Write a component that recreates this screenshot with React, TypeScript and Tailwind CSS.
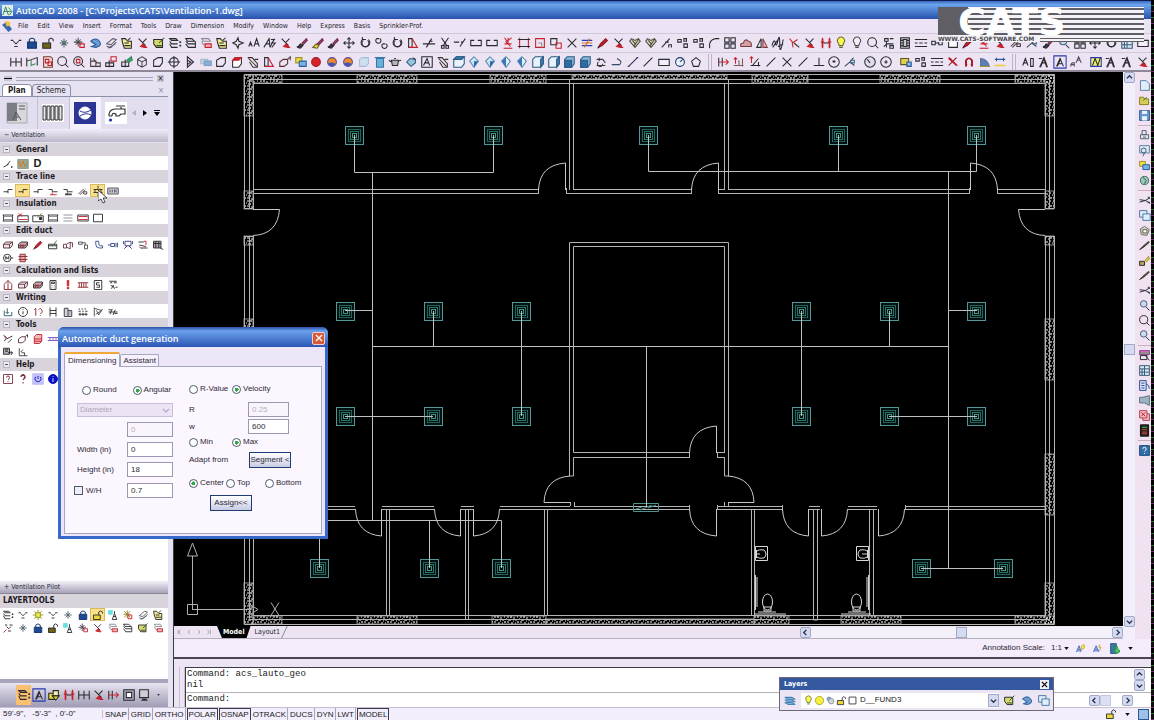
import { useState } from "react";

type Shape = [d: string, stroke: string, fill?: string];

const K = "#2a2a30";
const R = "#c8202c";
const G = "#8a8a94";
const B = "#2a5a9a";
const Y = "#e8d838";
const N = "none";

// 16x16 glyphs: path, stroke, fill
const ICONS: Record<string, Shape[]> = {
  freeze: [["M2 5h3M11 5h3M5 6l3 3 3-3M6 12h4", K]],
  freezeRed: [["M4 4h3M10 4h4M6 6l3 3 3-3M8 12h4", K], ["M2 14l4-4", R]],
  lock: [["M3 7h10v7H3z", "#10306a", "#1c4a94"], ["M5 7V4q3-3 6 0v3", "#10306a"]],
  unlock: [["M2 8h9v6H2z", K, "#6a6414"], ["M9 8V4q2-3 5 0v2", K]],
  unlockYellow: [["M2 8h9v6H2z", K, Y], ["M9 8V4q2-3 5 0v2", K]],
  snow: [["M8 3v10M3 8h10M5 5l6 6M11 5l-6 6", "#4a6468"]],
  snowRed: [["M7 2v10M2 7h10M4 4l6 6M10 4l-6 6", "#4a4a50"], ["M9 9h5v4H9z", R]],
  sun: [["M8 1v14M1 8h14M3 3l10 10M13 3L3 13", "#8a9420"], ["M5 5h6v6H5z", "#8a9420", "#f4f040"]],
  undo: [["M3 6q6-5 10 0t-4 7l-5-1 5-2-6-4", B, "#6a9ad0"]],
  layers: [["M2 3h7l3 3H4zM2 6l3 3h8M2 9l3 4h8V6", K]],
  layersDot: [["M2 3h7l2 2H4zM2 6l2 3h7M2 9l2 4h7", K], ["M13 6h2v2h-2zM13 10h2v2h-2z", N, K]],
  layersGrey: [["M3 9l7-6 4 1-6 6zM3 12l5 1 6-6M5 14l8-5", "#5a5a64"]],
  layersYellow: [["M2 3h4l3 3h4v8H5L3 8z", K, "#f0ec90"], ["M9 5l3-3M5 11h7M5 8h5", K]],
  layersGreen: [["M2 4h10v9H5L2 9z", K, "#d8d870"], ["M8 8l6-6M5 11h6", "#2a5a20"]],
  layersRed: [["M3 3h8l2 3H5zM3 6l2 4h4", G], ["M7 9h7v4H7z", R, "#f0b8bc"]],
  cross: [["M3 3l8 8M12 3l-4 4", K], ["M5 12l3-3 4 4h-2z", R, R]],
  star: [["M8 2l1 4 5 2-5 2-1 4-2-4-4-2 4-2z", K]],
  aa: [["M2 12l2-5 2 5M3 10h2M8 12l3-9 3 9M9 9h4", K]],
  aBold: [["M1 13l6-10 1 10M4 9h4M8 13l5-10M9 4h4l-3 4h4l-4 5", K]],
  eraser: [["M2 12h3M8 8l5-5 1 2-5 5z", "#6a2848", "#b04868"], ["M3 13l3-4 3 2-3 3z", K, "#403040"]],
  eraserY: [["M7 9l6-6 1 2-5 5z", "#6a2848", "#b04868"], ["M2 13l4-4 3 2-2 3z", "#6a6420", Y]],
  move: [["M8 2v12M2 8h12M6 4l2-2 2 2M6 12l2 2 2-2M4 6L2 8l2 2M12 6l2 2-2 2", K]],
  rotate: [["M5 4a5 5 0 1 0 7 0M5 4V1M5 4h4", K], ["M6 5a4 4 0 1 0 5 0", K]],
  rotate2: [["M3 3a3 3 0 1 0 4 0M3 3h3M10 9a3 3 0 1 0 4 0M10 9h3", K]],
  trap: [["M3 3h4v10H3z", K], ["M7 3l6 10H3", R]],
  extend: [["M1 9h14M5 13l6-10M8 6h4", K]],
  scissors: [["M4 2l6 9M12 2L6 11M4 11h3v3H4zM9 11h3v3H9z", K]],
  trim: [["M1 7h6M9 7h2M8 12l6-9", K]],
  brk: [["M6 5H2v6h12V5h-4", K]],
  redman: [["M4 2l3 4 5-4M8 2v7M4 9h8M5 6l6 6", R], ["M3 14h10", R]],
  frame: [["M3 2v12M13 2v12", R], ["M1 4h14M1 12h14", K]],
  rectRed: [["M3 3h10v10H3z", R], ["M6 8h4v5", G]],
  rectsRed: [["M2 3h7v7H2z", K], ["M8 8h6v6H8z", R]],
  x: [["M3 3l10 10M13 3L3 13", K]],
  lines: [["M2 5h12M2 11h12", "#2a3ac0"], ["M2 8h12M5 13l6-10", "#d07020"]],
  marker: [["M3 13l2-4 6-6 2 2-6 6z", "#8a1420", R], ["M2 14l2-3", K]],
  heart: [["M8 13L2 6l2-3 4 2 4-2 2 3zM5 5l4 5M12 4L7 11", "#4a4a3a", "#d4d4c4"]],
  chamfer: [["M2 13l9-10M6 7h4", K], ["M10 13v-3h3v3", K]],
  dots: [["M2 4h4v3H2zM9 3h3v3H9zM9 9h4v4H9z", K]],
  fillet: [["M3 14V9q1-5 7-6h4", K]],
  grid4: [["M2 2h5v5H2zM9 2h5v5H9zM2 9h5v5H2zM9 9h5v5H9z", K]],
  cloud: [["M2 12q-1-4 3-4 2-6 6-2 4 1 3 6z", "#7a3a40", "#d4a0a4"]],
  mirror: [["M7 3v10H2z", K], ["M9 3v10h5z", "#8a3a40", "#e0b8bc"]],
  scribble: [["M1 11q3-9 4-3t3-3 2 5 4-6M2 13l6-9M8 12l6-3", K]],
  redArrow: [["M3 3l4 5M7 13l-1-5 6-4", R], ["M8 8l6 5", K]],
  men: [["M4 2v12M2 7h4M12 2v12M10 7h4", R, R], ["M5 8h6", K], ["M3 3h2v10H3zM11 3h2v10h-2z", N, R]],
  bulb: [["M5 8a4 4 0 1 1 6 0l-1 3H6zM6 13h4", "#6a6a30", "#fafa50"]],
  bulbOff: [["M5 8a4 4 0 1 1 6 0l-1 3H6zM6 13h4", "#4a4a50", "#f4f0f8"]],
  zoom: [["M12 7a5 5 0 1 1-10 0 5 5 0 1 1 10 0M10 10l4 4", K]],
  zoomRed: [["M12 7a5 5 0 1 1-10 0 5 5 0 1 1 10 0M10 10l4 4", K], ["M5 5h4v4H5z", R]],
  zoomBlue: [["M11 6a4 4 0 1 1-8 0 4 4 0 1 1 8 0", "#4a5a7a", "#c8dcf0"], ["M10 10l4 4", "#202838"]],
  tree: [["M3 3h4v3H3zM9 3h4M5 6v7M5 9h8M9 11h4v3H9zM2 12l4-3", K]],
  film: [["M3 2h10v12H3z", K, "#c8c8cc"], ["M6 4h4v8H6zM3 5h3M3 8h3M3 11h3M10 5h3M10 8h3M10 11h3", K]],
  dashes: [["M1 4h14M1 12h14", K], ["M1 8h3M6 8h4M12 8h3", K]],
  oo: [["M2 6h4v4H2zM10 6h4v4h-4zM6 8h4", K]],
  dim: [["M2 3v10M8 3v10M14 3v10M2 8h12", K]],
  dimGreen: [["M2 3v10M2 7l12-4v9", K], ["M7 5v7l5-2", "#3a8a4a"]],
  sheet: [["M3 2h8l2 2v10H3z", "#7a3a30", "#f0e0dc"], ["M5 5h4v4H5zM8 8h4v4H8z", R]],
  table: [["M3 3v10h11M3 7h6v6M6 4l4 5M9 9h5v5", "#4a3a40"]],
  tableRed: [["M2 9h9v4H2zM6 6v8", K], ["M8 2h6v5H8z", R]],
  tableGreen: [["M2 8h8v5H2zM6 5v9", K], ["M8 6l5-4 1 4-4 2z", "#2a8a5a", "#3aa86a"]],
  cube: [["M8 2l5 3v6l-5 3-5-3V5zM3 5l5 3 5-3M8 8v6", "#4a4a50"]],
  poly: [["M3 6l5-3h5v6l-3 4H3z", K]],
  target: [["M13 8A5 5 0 1 1 3 8a5 5 0 1 1 10 0M8 1v14M1 8h14M10 8H6", K]],
  fan: [["M5 2v12l7-6zM5 6l4 2-4 3", K]],
  disk2: [["M2 5h8v5H2z", "#a8bcd0", "#c4d4e4"], ["M6 7h8v5H6z", "#7a9ac0", "#8ab0d4"]],
  boxRed: [["M3 6l3-3h7v7l-3 4H3z", K, "#ffffff"], ["M3 6l3-3h7l-3 3z", R, R]],
  house: [["M2 3h5l6 7v4H8L4 8M3 4l9 9M10 5h4", "#3a3030"]],
  ball: [["M13 8A5 5 0 1 1 3 8a5 5 0 1 1 10 0", "#a01820", "#d8202a"]],
  sphere: [["M13 8A5 5 0 1 1 3 8a5 5 0 1 1 10 0", "#5a4a8a", "#f08828"], ["M12 10a5 5 0 0 1-9 0q4-3 9 0z", N, "#3a58c0"]],
  iceCube: [["M3 5l3-2h7v7l-3 3H3z", "#a4bcd8", "#cfe0f0"]],
  blueCol: [["M4 4h8v10H4zM2 3h12", "#3a78a8", "#6ab0d8"]],
  teapot: [["M4 6h8l-1 6H5zM12 7l3-1M4 8L1 6M7 4h2", K, "#b8b4b8"]],
  gem: [["M3 8l4-4 6 1v4l-5 4z", "#2a5a80", "#9ac4dc"], ["M10 3l3 2", K]],
  aBox: [["M2 2h12v12H2z", K], ["M4 12l4-8 3 8M5 9h5", K]],
  boxBlue: [["M2 5l3-3h9v8l-3 4H2z", "#2a5a84", "#e8f2fa"], ["M2 5l3-3h9l-3 3z", "#2a5a84", "#3a80b4"]],
  boxSide: [["M2 5l3-3h9v8l-3 4H2z", "#2a5a84", "#e8f2fa"], ["M11 5l3-3v8l-3 4z", "#2a5a84", "#3a80b4"]],
  boxFill: [["M3 5l3-3h8v8l-3 4H3z", "#2a5a84", "#8ab8d8"], ["M3 6h8v8H3z", "#2a5a84", "#2c6ca4"]],
  diaBlue: [["M8 2l5 5-5 7-5-7z", "#5a8ab0", "#cfe4f2"], ["M8 7l5 0-5 7z", N, "#2a6aa8"]],
  diaLeft: [["M8 2l5 5-5 7-5-7z", "#5a8ab0", "#e4f0f8"], ["M8 2v12L3 7z", N, "#3a78b0"]],
  orbit: [["M3 5h7l3 4M5 8a3 3 0 1 0 5 2M3 12h10M6 3v4", "#3a3a3a"]],
  arrowCurve: [["M2 11h9q3-3 0-5M11 6L8 4", "#3a4a6a"]],
  line: [["M3 13L13 3M2 13h2M12 3h2", "#2a2a5a"]],
  lineThin: [["M3 13L13 3", K]],
  rect: [["M2 5h12v7H2z", K, "#f4f0fa"]],
  circle: [["M13 8A5 5 0 1 1 3 8a5 5 0 1 1 10 0M8 8l3-3", "#1a3a6a", "#eaf2fa"]],
  penta: [["M8 3l5 4-2 6H5L3 7z", K]],
  hRed: [["M2 3v10M6 3v10", K], ["M2 8h11M10 5l3 3-3 3", R]],
  tRed: [["M4 3v7M2 5l2-2 2 2", R], ["M2 12h11M12 4v9M8 6v6", "#7a5a5a"]],
  lRed: [["M4 2v7M2 4l2-2 2 2", R], ["M3 12h11M5 12l7-8M12 8v5", K]],
  perp: [["M8 3v9M2 12h12", K]],
  ringDot: [["M14 8A6 6 0 1 1 2 8a6 6 0 1 1 12 0M9 8H7v-1h2z", K]],
  node: [["M2 13l6-5 4-5M8 8l5 4", "#3a4a50"], ["M9 6h4v3H9z", "#3a6a8a"]],
  dial: [["M14 8A6 6 0 1 1 2 8a6 6 0 1 1 12 0M8 9L5 5", K, "#e0dce8"]],
  plusRing: [["M14 8A6 6 0 1 1 2 8a6 6 0 1 1 12 0M6 8h4M8 6v4", K]],
  tag: [["M2 4h9v7H2z", "#5a5420", "#e0d050"], ["M9 8h5v5H9z", "#2a5a94", "#8ab4e0"]],
  redX: [["M3 3l9 9M12 3l-9 9", "#7a1018"], ["M4 3l9 9M3 4l9 8", R]],
  magnet: [["M4 13V6q4-5 8 0v7M4 11h2M10 11h2", R], ["M5 13V6q3-4 6 0v7", "#8a1018"]],
  wedge: [["M3 13V4q8 1 10 9z", "#5a6a94", "#5a80b8"], ["M3 13h10", "#b09828"]],
  bars: [["M2 12h12", "#e0b020"], ["M2 5h12M4 3v4M12 3v4", "#2a5aa0"], ["M2 11h12v2H2z", N, "#f0d050"]],
  aOpen: [["M2 12l3-8 3 8M3 9h4M11 4h3v9h-3z", K]],
  aStrike: [["M3 14l5-11 4 11M5 9h6M2 4h4", K], ["M4 14l4-10 3 10", K]],
  aFrame: [["M1 1h14v14H1z", "#2838b0"], ["M4 13l4-9 4 9M5 10h6M5 13l4-9", K]],
  aSmall: [["M2 13q0-5 4-4v4M2 11h4M8 9l3-7 3 7M9 6h4", "#4a4a5a"]],
  aYellow: [["M2 3h12v10H2z", "#2838b0", "#f0f070"], ["M4 12l3-8 3 8 3-9", K]],
  pipe: [["M2 9h6V6h6M8 9v2", K]],
  pipeRed: [["M2 6h5v3h7", K], ["M4 13h9M7 10v3", R]],
  pipeBold: [["M2 6h5v3h7M4 13h9M7 10v3M4 12h9", K]],
  pencil: [["M2 12L9 5M4 13l7-7M9 9h4v3H9z", "#4a3a40"]],
  fit: [["M2 6h12M2 10h12M8 1v4M8 11v4M4 6v4M12 6v4", K, "#d8d0b0"]],
  radiator: [["M1 4h14v8H1zM4 6v4M7 6v4M10 6v4M12 6v4", "#4a4a54", "#d4d0dc"]],
  ins: [["M1 4h14M1 12h14M2 4v8M14 4v8", K], ["M2 6h12M2 10h12", G]],
  insRed: [["M1 5h14v8H1z", K], ["M2 2l5 4M7 2L2 6M2 10h12", R]],
  insGreen: [["M1 5h14v8H1z", K], ["M7 7l6-5", "#7a8a20"], ["M10 7h3v3h-3z", K, K]],
  insLines: [["M2 4h12M2 8h12M2 12h12", G]],
  insFill: [["M1 4h14v8H1z", K, "#ffffff"], ["M2 6h12M2 10h12", R]],
  insBox: [["M2 3h12v10H2z", K, "#ffffff"]],
  duct: [["M2 7l3-3h9v4l-3 4H2zM2 7h8v5M10 7l4-3", "#5a3038", "#f0e4e8"]],
  ductDark: [["M2 7l3-3h9v4l-3 4H2z", K, "#c8a8ac"], ["M2 9h9l3-4M5 7v5M8 7v5", "#7a2830"]],
  ductPen: [["M2 7h11v6H2zM2 9h11", K], ["M7 10l6-8", "#4a6a30"]],
  cone: [["M2 7h4v5H2zM6 7l5-3v9l-5-2M11 5h3v6", "#6a3840"]],
  ducts: [["M2 4h5v3H2zM10 8h4v5h-4zM7 5h4v3", "#4a4a50"]],
  bend: [["M5 3v4q0 5 5 5h4V9h-3q-2 0-2-3V3z", "#3a4a8a"]],
  tee: [["M1 8h4M5 6h5v4H5zM12 5v6M14 5v6", "#3a4a8a"]],
  robot: [["M4 3h8v6H4zM3 13l4-4M13 13L9 9M2 3v4M14 3v4", "#3a3a8a"]],
  mixed: [["M2 4h7M3 8l9 2M5 12h9", K], ["M9 3h3v5M3 10l3 3", R]],
  fullDuct: [["M2 3h10v9H2zM2 6h10M5 3v9M9 3v9M11 12l4 2", K, "#a8a4a8"]],
  motor: [["M12 8A5 5 0 1 1 2 8a5 5 0 1 1 10 0M12 8h3M5 10V6l2 3 2-3v4", K]],
  globeRed: [["M4 3h7v10H4zM2 6h12M2 10h12", "#8a2830", "#e8a8a8"]],
  arch: [["M3 14V7l5-5 5 5v7zM8 2v12", "#8a2830"]],
  calc: [["M4 2h8v12H4zM6 4h4v2H6zM6 9h1M9 9h1M6 12h1M9 12h1", K]],
  bang: [["M7 2h2v7H7zM7 11h2v2H7z", R, R]],
  fence: [["M1 5h14M1 11h14M3 5v6M6 5v6M9 5v6M12 5v6", "#8a2830"]],
  sBox: [["M3 2h10v12H3z", K], ["M10 5H6v3h4v3H6", K]],
  adc: [["M3 3h10M4 5h3M9 5h4M5 8l2 2 2-2M6 13l2-4 2 4M11 11h3", K]],
  down: [["M3 6v7h10V8M7 3v7M5 8l2 2 2-2", "#2a5a60"]],
  info: [["M14 8A6 6 0 1 1 2 8a6 6 0 1 1 12 0M8 7v4M8 4v1", K]],
  oneQ: [["M3 5l2-2v10M9 5q2-4 4 0t-2 5M11 12v1", "#8a2030"]],
  hh: [["M4 2v12M12 2v12M4 6h8M4 10h8", K]],
  building: [["M3 14V3h5v11M8 6h5v8H3M10 8h1M10 11h1", "#3a3a40", "#d4d0dc"]],
  scale: [["M2 4h2M6 4h2M10 4h2M2 7h3M7 7h2M11 7h3M2 11h12M4 9v4M8 9v4M12 9v4", K]],
  flag: [["M3 2v12M3 3l10 3-8 5M6 6l3 6 5-8", "#4a4a50"]],
  dist: [["M2 8h12M4 11l3-7M8 12l3-7M2 5h4M10 10h4", K]],
  tools: [["M2 3l4 3-3 5M6 8l8-4M8 13l5-5", K], ["M3 5l3 1", R]],
  pump: [["M2 8l4-3h5v5l-4 3H2zM11 5l3-3v4", "#5a3038"]],
  stack: [["M3 5l3-3h7v9l-3 3H3zM3 8h10M3 11h10", R, "#f0b8b8"]],
  purple: [["M1 6h14M1 10h14M4 6v4M8 6v4M12 6v4", "#7a58b8"]],
  export: [["M2 3h8v8H2zM4 5h4M4 7h4M8 9h6l-2-2M14 9l-2 3", K, "#b4b0b8"]],
  axes: [["M3 3v10h11M6 9h4v4M8 5l-3 3", "#3a3a40"]],
  helpBox: [["M2 2h12v12H2z", "#7a3040"], ["M6 6q0-2 2-2t2 2-2 3M8 11v1", "#7a1828"]],
  help: [["M5 5q0-3 3-3t3 3-3 4M8 12v2M6 5q0-2 2-2t2 2-2 4", "#6a0c18"]],
  power: [["M1 1h14v14H1z", "#b8b8f0", "#c4c4f8"], ["M5 5a4 4 0 1 0 6 0M8 4v4", "#1010c0"]],
  infoBlue: [["M14 8A6 6 0 1 1 2 8a6 6 0 1 1 12 0", "#0810a8", "#0810c8"], ["M8 7v5M8 4v1", "#ffffff"]],
  leader: [["M2 12l4-2 5-6M6 10l3-2", K], ["M12 11h2v2h-2z", N, K]],
  woven: [["M1 2h14v12H1z", "#8a9a80", "#a0a488"], ["M2 4l3 8 3-8 3 8 3-8", "#d07828"], ["M2 2v2M14 2v12", "#4ab4d0"]],
  figure: [["M10 3v3l3 8H7l3-8M8 10h4", K], ["M2 2h5v5H2z", "#68e0e0", "#68e0e0"]],
  sunRed: [["M2 7h9M7 2v10M3 3l8 8M11 3l-8 8", "#8a8420"], ["M8 8h5v5H8z", R]],
  shapes: [["M2 6h7v7H2z", K, Y], ["M7 3h6v6H7z", K, "#f4f0b0"], ["M6 9l4 5 4-5z", K, Y]],
  marquee: [["M2 2h12v12H2z", K, "#a8a8b4"], ["M5 5h6v6H5z", K, "#ffffff"]],
  monitor: [["M3 2h10v9H3zM6 13h5M5 14h7", K, "#d0ccd8"]],
  page: [["M3 2h7l4 4v8H3z", "#5a84ac", "#e0eef8"]],
  folder: [["M2 4h5l1 2h5v7H2z", "#8a7c20", "#d8cc58"], ["M6 8l5-4", "#3a7a3a"]],
  save: [["M2 2h12v12H2z", "#2a5a94", "#6a9cd0"], ["M5 2h6v4H5zM5 9h6v5H5z", N, "#f0f4fa"]],
  print: [["M5 2h5v5H5zM3 7h10v5H3zM6 10h4", "#5a6478", "#e4e8f0"]],
  preview: [["M2 2h12v9H2z", "#5a84ac", "#d8e8f4"], ["M10 8a3 3 0 1 1-6 0 3 3 0 1 1 6 0M8 11l-2 4", "#4a5a6a"]],
  publish: [["M2 3h7v6H2z", "#a09020", "#f0e040"], ["M6 7h8v6H6z", "#2a60a0", "#78b0e8"]],
  globe: [["M13 8A5 5 0 1 1 3 8a5 5 0 1 1 10 0", "#3a6a64", "#9cc8b8"], ["M6 4l4 4-2 4", "#2a5a44"]],
  cut: [["M2 7l7 1 5-3M2 10l7-2 5 3M12 4h2v2M12 10h2v2", "#2a3040"]],
  copy: [["M2 2h9v8H2z", "#4a78a8", "#e0eef8"], ["M6 6h9v8H6z", "#4a78a8", "#e0eef8"]],
  paste: [["M3 6l5-3 6 4-3 7-7-1z", "#6a6a5a", "#d8d8c8"], ["M6 7h5v4H6z", "#5a5a50", "#ffffff"]],
  brush: [["M2 13l4-4 7-6 1 1-7 6z", "#403830", "#6a5038"]],
  brushGold: [["M2 9h6v5H2z", K, "#b8a060"], ["M8 9l5-6 1 3-4 4", "#a09020", "#e8d040"]],
  props: [["M2 2h12v5H2z", "#8a3a8a", "#e070c8"], ["M2 5h12", "#40b040"], ["M3 8h8v5H3zM9 8l5 6", K]],
  gridBlue: [["M2 2h12v12H2zM2 6h12M2 10h12M8 2v12M5 6v8", "#3a5a7a", "#d8e8f0"]],
  sheetSet: [["M2 2h8v12H2zM4 5h4M4 8h4M4 11h4M10 6q4 1 4 6", "#2a4a9a", "#e0e8f8"]],
  mark: [["M2 4h4l8-2v12l-6-3H2z", "#5a7484", "#9cb4c0"]],
  closeRed: [["M2 2h9v9H2zM11 6h3v8H6v-3", "#b84050", "#f0c0c4"], ["M4 4l5 5M9 4L4 9", "#c01828"]],
  calcDark: [["M3 1h10v14H3z", "#101010", "#282420"], ["M5 4h6", "#40c060"], ["M5 7h6M5 10h6M5 12h6", "#d04040"]],
  helpBlue: [["M2 2h12v12H2z", "#1c4880", "#3470a8"], ["M6 6q0-2 2-2t2 2-2 3M8 11v1", "#ffffff"]],
  layersBlue: [["M2 5h8l4 2H6zM2 8h8l4 2H6zM2 11h8l4 2H6z", "#4a84b8", "#b8d8f0"]],
  twoCirc: [["M9 6a3 3 0 1 1-6 0 3 3 0 1 1 6 0", "#5a84b4", "#8ab4e0"], ["M13 9a4 4 0 1 1-8 0 4 4 0 1 1 8 0", "#8a9098", "#d0d4dc"]],
  sunYellow: [["M14 8A6 6 0 1 1 2 8a6 6 0 1 1 12 0", "#a8a020", "#f8f040"]],
  square: [["M3 3h10v10H3z", K, "#ffffff"]],
  annoA: [["M2 13l4-9 3 9M4 10h4", "#3a5ac0", "#a8c0e8"], ["M9 5l4-3 1 5-4 3z", "#b8a820", "#f0e860"]],
  annoB: [["M2 13l4-9 4 9M4 10h5", "#3a5ac0", "#a8c0e8"], ["M11 2l-1 4h3l-2 5", "#c09818"]],
  annoC: [["M2 2h7v12H2z", "#2a5a84", "#3a78a4"], ["M13 10a3 3 0 1 1-4-2l-1-3 3 1", "#289040", "#50c060"]],
};

function Icon({ name, className = "size-3" }: { name: string; className?: string }) {
  return (
    <svg viewBox="0 0 16 16" className={className + " shrink-0"} fill="none" strokeWidth={1.2} aria-hidden="true">
      {(ICONS[name] ?? []).map(([d, stroke, fill], i) => (
        <path key={i} d={d} stroke={stroke} fill={fill ?? "none"} />
      ))}
    </svg>
  );
}

function ToolButton({ name, className = "", icon = "size-3.5" }: { name: string; className?: string; icon?: string }) {
  return (
    <button type="button" aria-label={name} className={"flex items-center justify-center " + className}>
      <Icon name={name} className={icon} />
    </button>
  );
}

const ROW_ONE =
  "freeze lock unlock snow snowRed undo layersGrey layersYellow cross layersGreen layersDot layers layersRed layersYellow star aa aBold cross eraser eraserY eraser move rotate rotate2 rotate trap extend scissors trim brk brk redman frame rectRed rectsRed x lines marker cross heart heart chamfer dots dots fillet grid4 cloud mirror scribble redArrow cross men bulb bulbOff zoom tree film dashes oo square marker redman cross pencil node eraser zoomBlue grid4 move rotate gridBlue rect";

// "|" is a toolbar grip, "." a small gap
const ROW_TWO =
  "dim dimGreen sheet zoom zoomRed table tableRed tableGreen cube poly target fan disk2 poly boxRed house trap pump publish ball sphere sphere iceCube blueCol teapot gem aBox house boxBlue diaBlue diaBlue diaLeft diaLeft boxSide boxSide boxFill boxFill orbit arrowCurve line lineThin rect circle penta | hRed tRed lRed lineThin x lineThin perp ringDot node . dial plusRing . tag dots dashes redX magnet wedge bars | aOpen aStrike aFrame aSmall . aYellow aStrike aStrike cross";

const MENUS = ["File", "Edit", "View", "Insert", "Format", "Tools", "Draw", "Dimension", "Modify", "Window", "Help", "Express", "Basis", "Sprinkler-Prof."];

const GROUPS: { title: string; rows: string[] }[] = [
  { title: "General", rows: ["leader woven D"] },
  { title: "Trace line", rows: ["pipe *pipe pipe pipeRed pipeBold pencil *fit radiator"] },
  { title: "Insulation", rows: ["ins insRed insGreen ins insLines insFill insBox"] },
  { title: "Edit duct", rows: ["duct ductDark marker ductPen cone ducts bend tee robot mixed fullDuct", "motor globeRed"] },
  { title: "Calculation and lists", rows: ["arch duct ductDark calc bang fence sBox adc"] },
  { title: "Writing", rows: ["down info oneQ hh building scale flag dist"] },
  { title: "Tools", rows: ["tools pump stack purple", "export axes"] },
  { title: "Help", rows: ["helpBox help power infoBlue"] },
];

const LAYER_ROWS = [
  "layersDot freeze sun freeze snow lock *unlockYellow figure sunRed layersGrey layersYellow",
  "freezeRed snow lock unlock figure snowRed cross layersRed layers layersGreen layersRed",
];

function IconRow({ row }: { row: string }) {
  return (
    <div className="flex h-[13px] items-center">
      {row.split(" ").map((raw, i) => {
        const active = raw.startsWith("*");
        const name = active ? raw.slice(1) : raw;
        if (name === "D") {
          return (
            <button key={i} type="button" className="w-[15px] font-['Liberation_Sans'] text-[11px] leading-none font-bold">
              D
            </button>
          );
        }
        return (
          <ToolButton
            key={i}
            name={name}
            icon="size-3"
            className={active ? "h-[13px] w-[15px] border border-[#d8b860] bg-[#fbe08c]" : "w-[15px]"}
          />
        );
      })}
    </div>
  );
}

function Logo() {
  return (
    <div className="absolute top-[7px] right-[10px] z-10 w-[206px] bg-[#f4f2f6]">
      <svg viewBox="0 0 206 35" className="block w-full overflow-visible" aria-hidden="true">
        <path d="M0 0h30v28H0z" fill="#5e5e64" />
        {[1, 6, 11, 16, 21, 26].map((y) => (
          <path key={y} d={`M24 ${y}h182v2H24z`} fill="#5e5e64" />
        ))}
        <path d="M102 31h104v1H102zM102 34h104v1H102z" fill="#5e5e64" />
        <text x="20" y="28" fill="#ffffff" fontFamily="'DejaVu Sans', sans-serif" fontWeight="700" fontSize="38">
          CATS
        </text>
        <text x="0" y="34" fill="#4a4a50" fontFamily="'DejaVu Sans', sans-serif" fontWeight="700" fontSize="6">
          WWW.CATS-SOFTWARE.COM
        </text>
      </svg>
    </div>
  );
}

function Palette() {
  return (
    <aside className="flex w-[174px] shrink-0 flex-col border-r border-[#3c3a44] bg-[#e6e2f2] pr-[5px]">
      <div className="flex h-[13px] items-center gap-1 px-1">
        <button type="button" aria-label="Collapse" className="flex h-[5px] w-2 items-center bg-[#c8c4d4]">
          <span className="h-px w-full bg-black" />
        </button>
        <div className="h-1 flex-1 border-y border-[#a8a4b8]" />
        <button type="button" aria-label="Close palette" className="flex size-[7px] items-center justify-center bg-[#c8c4d4] text-[8px] leading-none">×</button>
      </div>
      <div className="flex h-3 items-end border-b border-[#8c90a8] px-0.5 text-[8px] leading-[11px]">
        <button type="button" className="rounded-t-sm border border-b-0 border-[#8c90a8] bg-white px-[5px] font-bold">Plan</button>
        <button type="button" className="rounded-t-sm border border-b-0 border-[#8c90a8] px-1">Scheme</button>
        <button type="button" aria-label="Close tab" className="ml-auto pr-0.5 text-[#8a8698]">×</button>
      </div>
      <div className="flex h-8 items-center bg-[#e2def0] px-1.5">
        <button type="button" aria-label="Heating" className="flex h-8 w-8 items-center border-r border-[#c4c0d0]">
          <svg viewBox="0 0 22 22" className="size-[22px]">
            <path d="M1 1h20v20H1z" fill="#d8d8dc" stroke="#aaa" />
            <path d="M1 1h10v18H1z" fill="#7c7c84" />
            <path d="M7 18l3-8 5 8M9 15h4M13 4h6M13 7h6" stroke="#55555c" fill="none" />
          </svg>
        </button>
        <button type="button" aria-label="Radiators" className="flex h-8 w-8 items-center justify-center">
          <svg viewBox="0 0 22 22" className="size-[22px]">
            <path d="M0 2h22v18H0z" fill="#ffffff" />
            {[1, 5, 9, 13, 17].map((x) => (
              <path key={x} d={`M${x} 4h3v14h-3z`} fill="#e8e8e8" stroke="#33333a" />
            ))}
          </svg>
        </button>
        <button type="button" aria-label="Ventilation" className="flex h-8 w-8 items-center justify-center border-l border-[#c4c0d0] bg-[#f4f0fc]">
          <svg viewBox="0 0 22 22" className="size-[22px]">
            <path d="M0 0h22v22H0z" fill="#2c3494" />
            <circle cx="11" cy="11" r="6" fill="#ffffff" stroke="#fff" />
            <path d="M6 9q5 3 11-1M6 14q6-4 11-1" stroke="#2c3494" fill="none" />
          </svg>
        </button>
        <button type="button" aria-label="Sanitary" className="flex h-8 w-8 items-center justify-center">
          <svg viewBox="0 0 22 22" className="size-[22px]">
            <path d="M0 0h22v22H0z" fill="#ffffff" />
            <path d="M4 14v-2q1-5 7-5h5V5M11 4h9M16 7h4v5h-4l-2 2h-3v-2q-4-2-4 2M4 14h3" fill="none" stroke="#333" strokeWidth="1.2" />
            <circle cx="5.500" cy="18" r="1.6" fill="#2030b0" />
          </svg>
        </button>
        <div className="ml-auto flex gap-[7px] pr-0.5">
          <svg viewBox="0 0 4 6" className="h-1.5 w-1"><path d="M4 0v6L0 3z" fill="#b4b0c0" /></svg>
          <svg viewBox="0 0 4 6" className="h-1.5 w-1"><path d="M0 0v6l4-3z" fill="#000" /></svg>
          <svg viewBox="0 0 6 6" className="size-1.5"><path d="M0 0h6v1H0zM0 2h6L3 6z" fill="#000" /></svg>
        </div>
      </div>
      <h2 className="mb-px flex h-[13px] shrink-0 items-center bg-linear-to-b from-[#f0ecf8] to-[#bcb8ca] pl-1 text-[7px] leading-none text-[#2c2a34]">− Ventilation</h2>
      <div className="flex-1 bg-white">
        {GROUPS.map((g) => (
          <section key={g.title}>
            <h3 className="flex h-[13px] items-center gap-1.5 bg-[#d9d4dc] pl-[3px] text-[8px] leading-none font-bold text-[#1c1a24]">
              <span className="flex size-[7px] items-center justify-center border border-[#b8b4c4] bg-[#eeeaf4] leading-none font-normal">
                <span className="h-px w-[3px] bg-[#555]" />
              </span>
              {g.title}
            </h3>
            <div className="pt-px">
              {g.rows.map((r) => <IconRow key={r} row={r} />)}
            </div>
          </section>
        ))}
      </div>
      <h2 className="flex h-3 shrink-0 items-center bg-linear-to-b from-[#f4f0fa] to-[#a8a4b8] pl-1 text-[7px] leading-none text-[#2c2a34]">+ Ventilation Pilot</h2>
      <h3 className="flex h-[15px] shrink-0 items-center border-t border-[#8c8898] bg-[#d9d4dc] pl-[3px] text-[8px] leading-none font-bold">LAYERTOOLS</h3>
      <div className="h-[71px] shrink-0 bg-white">
        {LAYER_ROWS.map((r) => <IconRow key={r} row={r} />)}
      </div>
      <div className="h-1 shrink-0 bg-[#a8a4bc]" />
      <div className="flex h-6 shrink-0 items-center bg-linear-to-b from-[#e8e4f0] to-[#a09cb4] pl-4">
        {["layersDot", "aFrame", "shapes", "men", "dim", "cross", "hRed", "marquee", "monitor"].map((n, i) => (
          <ToolButton key={n} name={n} className={i === 0 ? "h-5 w-[15px] bg-[#f8c070]" : "h-5 w-[15px]"} />
        ))}
        <svg viewBox="0 0 4 3" className="ml-1.5 h-[2px] w-[3px]"><path d="M0 0h4L2 3z" fill="#333" /></svg>
      </div>
    </aside>
  );
}

const DIFFUSERS: [number, number][] = [
  [354.5, 135.5], [493.5, 135.5], [648.5, 135.5], [838.5, 135.5], [976.5, 135.5],
  [345.5, 311.5], [433.5, 311.5], [521.5, 311.5], [801.5, 311.5], [889.5, 311.5], [976.5, 311.5],
  [345.5, 416.5], [433.5, 416.5], [521.5, 416.5], [801.5, 416.5], [889.5, 416.5], [976.5, 416.5],
  [319.5, 568.5], [429.5, 568.5], [501.5, 568.5], [921.5, 568.5], [1003.5, 568.5],
];

const WALLS =
  // outer walls
  "M244.5 208V74.5H1054.5V208M249.5 209V79.5H1049.5V209M253.5 209V83.5H1045.5V209" +
  "M244.5 236V624.5H1054.5V236M249.5 236V619.5H1049.5V236M253.5 236V615.5H1045.5V236M244.5 208.5h9M244.5 236.5h9M1045.5 208.5h9M1045.5 236.5h9" +
  // upper rooms
  "M253 189.5H538M253 193.5H538M538.5 188v6M566 193.5H691M573 189.5H691M691.5 188v6M566.5 188v6M718 189.5h6M718 193.5H969M728 189.5H969M969.5 188v6M718.5 188v6M997 189.5h48M997 193.5h48M997.5 188v6" +
  "M569.5 80V190M573.5 83V190M724.5 83V190M728.5 80V190" +
  // core
  "M569.5 476V242.5H728.5V476M573.5 452.5V246.5H724.5V452.5M573.5 452.5H689M573.5 457.5H689M689.5 452v6M717 452.5h8M717 457.5h8M717.5 452v6M573.5 457.5V476h-4M724.5 457.5V476h4" +
  // lower rooms
  "M253 506.5H355M253 509.5H355M382 506.5h52M382 509.5h52M461 506.5h13M461 509.5h13M500 506.5h70M500 509.5H689M574 506.5H689M689.5 505v5M717 506.5h65M717 509.5h65M717.5 505v5M782.5 505v5M809 506.5h11M809 509.5h11M848 506.5h29M848 509.5h29M905 506.5h140M905 509.5h140M905.5 505v5M570.5 502v4M574.5 502v4M724.5 502v4M728.5 502v4" +
  "M386.5 510V615M389.5 510V615M465.5 510V620M468.5 510V620M544.5 510V615M547.5 510V615M751.5 510V615M754.5 510V615M813.5 510V620H817.5V510M869.5 510V615M873.5 510V615";

const DOORS =
  "M253 209.5h26.5q-2 25-26.5 26M1045 209.5h-26.5q2 25 26.5 26" +
  "M538.5 190q1-25 27-27v27M691.5 190q1-25 27-27v27M997.5 190q-1-25-27-27v27M689.5 453q1-25 27-27v27" +
  "M570 476q-25 2-26 26.5h26M728 476q25 2 26 26.5h-26" +
  "M355.5 509q1 25 26 27v-27M434.5 509q1 25 26 27v-27M499.5 509q-1 25-26 27v-27M689.5 509q1 25 27 27v-27M782.5 509q1 25 26 27v-27M847.5 509q-1 25-26 27v-27M904.5 509q-1 25-26 27v-27";

const TRACES =
  "M354.5 135v37.5H493.5V135M372.5 172.5V520.5M319.5 568V520.5H501.5V568M429.5 520V568M372 346.5H948M648.5 135v36.5H976.5V135M838.5 135v36M948.5 171.5V568" +
  "M345 310.5h27M433.5 311v35M521.5 311V416M801.5 311V416M889.5 311v35M948 310.5h29M345 416.5h88M889 416.5h88M646.5 346V507M921 568.5h82";

const HATCHES: [number, number, number, number][] = [
  [253, 75, 29, 8], [357, 75, 60, 8], [490, 75, 56, 8], [572, 75, 155, 4], [752, 75, 56, 8], [880, 75, 60, 8], [1015, 75, 39, 8],
  [244, 75, 9, 41], [244, 191, 9, 18], [244, 236, 9, 9], [244, 319, 9, 62], [244, 583, 9, 41],
  [1045, 75, 9, 41], [1045, 191, 9, 18], [1045, 236, 9, 9], [1045, 319, 9, 61], [1045, 454, 9, 61], [1045, 583, 9, 41],
  [253, 616, 29, 8], [357, 616, 60, 8], [492, 616, 54, 8], [546, 619, 208, 5], [754, 616, 35, 8], [841, 616, 60, 8], [1015, 616, 39, 8],
];

function FloorPlan() {
  return (
    <svg viewBox="174 72 949 554" className="min-h-0 w-full flex-1 bg-black" fill="none" preserveAspectRatio="xMidYMid meet" role="img" aria-label="Floor plan">
      <defs>
        <pattern id="concrete" width="13" height="8" patternUnits="userSpaceOnUse">
          <path d="M0 1h2M4 0v2M6 2h2M10 1h1M12 3h1M1 4h1M3 3v2M6 5h1M8 4h2M11 5v2M0 6h2M4 7h2M8 7h1" stroke="#f0f0f0" strokeWidth="1.2" />
        </pattern>
      </defs>
      {HATCHES.map(([x, y, w, h], i) => (
        <rect key={i} x={x} y={y} width={w} height={h} fill="url(#concrete)" stroke="#c8c8c8" strokeWidth="0.7" />
      ))}
      <path d={WALLS} stroke="#b4b4b4" />
      <path d={DOORS} stroke="#c8c8c8" />
      {/* sanitary objects */}
      <g stroke="#d8d8d8">
        <path d="M755.5 546.5h12v14h-12zM856.5 546.5h12v14h-12zM756.5 550v8M867.5 550v8M755.5 575v35M757 577v30M868.5 575v35M867 577v30M754 614h32M841 614h30M758 612h18M848 612h18" />
        <path d="M757 551q2-2 7-1 4 4 0 8-5 1-7-1M867 551q-2-2-7-1-4 4 0 8 5 1 7-1M862 554h5M757 554h3" />
        <path d="M764 611h7v-4h-7zM853 611h7v-4h-7z" />
        <ellipse cx="767.5" cy="602" rx="5" ry="8" /><ellipse cx="856.5" cy="602" rx="5" ry="8" />
      </g>
      {DIFFUSERS.map(([x, y]) => (
        <g key={`${x}-${y}`} stroke="#24625e">
          <rect x={x - 9} y={y - 9} width="18" height="18" fill="#031010" stroke="#549696" />
          <rect x={x - 6} y={y - 6} width="12" height="12" />
          <rect x={x - 4} y={y - 4} width="8" height="8" stroke="#2c7468" />
          <rect x={x - 2} y={y - 2} width="4" height="4" stroke="#4c9480" />
        </g>
      ))}
      <path d="M633.5 503.5h25v8h-25zM640 510l12-5M636 509l6-2M648 508l8-3" stroke="#4c9490" />
      <path d={TRACES} stroke="#c0c0c0" />
      {/* UCS icon */}
      <path d="M187.5 604.5h10v10h-10zM192.5 609V556M187.5 556h10l-5-13zM192 609.5h58M250 604.5v10l8-5zM271 602.5l8 13M279 602.5l-8 13" stroke="#b0b0b0" />
    </svg>
  );
}

function ScrollButton({ label, d }: { label: string; d: string }) {
  return (
    <button type="button" aria-label={label} className="flex size-[11px] shrink-0 items-center justify-center rounded-xs border border-[#a4a8c8] bg-[#d4daf0]">
      <svg viewBox="0 0 8 8" className="size-[7px]" fill="none" stroke="#28304c" strokeWidth="1.6"><path d={d} /></svg>
    </button>
  );
}

const UP = "M1 5l3-3 3 3";
const DOWN = "M1 3l3 3 3-3";
const LEFT = "M5 1L2 4l3 3";
const RIGHT = "M3 1l3 3-3 3";

const SIDE_TOOLS = "page folder save | print preview publish globe | cut copy paste brush brushGold brush cut zoomBlue zoom zoomBlue | props gridBlue sheetSet mark closeRed calcDark | helpBlue";

function Workspace() {
  return (
    <main className="flex min-w-0 flex-1 flex-col">
      <div className="flex min-h-0 flex-1">
        <div className="flex min-w-0 flex-1 flex-col">
          <FloorPlan />
          <div className="flex h-[13px] shrink-0 items-center border-b border-[#b4b0bc] bg-[#ece4f2] text-[7px] leading-none">
            <div className="flex h-full w-[43px] items-center gap-1 pl-0.5">
              {["M3 1v6M6 1L4 4l2 3", "M5 1L3 4l2 3", "M3 1l2 3-2 3", "M2 1l2 3-2 3M6 1v6"].map((d) => (
                <svg key={d} viewBox="0 0 8 8" className="size-1.5" fill="none" stroke="#98949f"><path d={d} /></svg>
              ))}
            </div>
            <button type="button" className="h-full bg-black px-1.5 font-bold text-white [clip-path:polygon(0_0,100%_0,calc(100%-4px)_100%,5px_100%)]">Model</button>
            <button type="button" className="h-full pr-1 pl-1">Layout1</button>
            <span className="h-full w-px -skew-x-[25deg] bg-[#8c8898]" />
            <div className="ml-auto flex w-[34%] items-center justify-between bg-[#f4f0fa]">
              <ScrollButton label="Scroll left" d={LEFT} />
              <span className="h-[11px] w-[11px] border border-[#a4a8c8] bg-[#d4daf0]" />
              <ScrollButton label="Scroll right" d={RIGHT} />
            </div>
          </div>
        </div>
        <div className="flex w-3 shrink-0 flex-col items-center justify-between bg-[#f2eefa] pb-3">
          <ScrollButton label="Scroll up" d={UP} />
          <span className="size-[11px] border border-[#a4a8c8] bg-[#d4daf0]" />
          <ScrollButton label="Scroll down" d={DOWN} />
        </div>
        <div className="flex w-4 shrink-0 flex-col items-end bg-[#f0e2f0] pt-1.5">
          {SIDE_TOOLS.split(" ").map((n, i) =>
            n === "|" ? (
              <span key={i} className="my-0.5 h-px w-[13px] bg-[#c8b0c0]" />
            ) : (
              <ToolButton key={i} name={n} className="h-[15px] w-[13px]" icon="size-[13px]" />
            ),
          )}
        </div>
      </div>
      <div className="flex h-5 shrink-0 items-center justify-end gap-1.5 border-b-2 border-[#4a4650] bg-[#f4ecfa] pr-[18px] font-['Liberation_Sans',sans-serif] text-[8px] leading-none text-[#2c2a34]">
        <span>Annotation Scale:</span>
        <button type="button" className="flex items-center gap-0.5">
          1:1
          <svg viewBox="0 0 6 4" className="h-[3px] w-[5px]"><path d="M0 0h6L3 4z" fill="#111" /></svg>
        </button>
        <ToolButton name="annoA" icon="size-[11px]" />
        <ToolButton name="annoB" icon="size-[11px]" />
        <ToolButton name="annoC" icon="size-[13px]" />
        <svg viewBox="0 0 6 4" className="h-[3px] w-[5px]"><path d="M0 0h6L3 4z" fill="#111" /></svg>
      </div>
      <div className="flex h-12 shrink-0 bg-[#ece4f2] pt-2">
        <div className="ml-[5px] w-1.5 border-x border-[#c8c0d0]" />
        <div className="flex min-w-0 flex-1 flex-col border-t border-l border-[#3c3a44] bg-white font-['Liberation_Mono',monospace] text-[9px] text-[#202024]">
          <div className="flex h-6 justify-between pt-px">
            <pre className="pl-px font-[inherit] leading-[11px]">{"Command: acs_lauto_geo\nnil"}</pre>
            <div className="pr-1.5">
              <ScrollButton label="History up" d={UP} />
              <ScrollButton label="History down" d={DOWN} />
            </div>
          </div>
          <div className="flex flex-1 items-center border-t border-[#b4b0bc] pr-[18px]">
            <label htmlFor="command" className="pl-px">Command:</label>
            <input id="command" className="ml-1 h-3 min-w-0 flex-1 bg-transparent outline-none" />
            <ScrollButton label="Command left" d={LEFT} />
            <span className="mr-[11px] size-[11px] border border-[#c4c8dc] bg-[#dce0f4]" />
            <ScrollButton label="Command right" d={RIGHT} />
          </div>
        </div>
      </div>
    </main>
  );
}

const fieldText = "font-['Liberation_Sans',sans-serif] text-[8px] leading-none";

function Radio({ name, label, checked, className = "" }: { name: string; label: string; checked?: boolean; className?: string }) {
  return (
    <label className={"flex items-center gap-0.5 whitespace-nowrap " + className}>
      <input
        type="radio"
        name={name}
        defaultChecked={checked}
        className="size-[9px] shrink-0 appearance-none rounded-full border border-[#4a5c6c] bg-white checked:bg-[radial-gradient(circle,#30a848_0_2px,#ffffff_2px)]"
      />
      {label}
    </label>
  );
}

function DuctDialog() {
  const [tab, setTab] = useState("Dimensioning");
  const box = "h-[15px] border border-[#9c98b4] bg-white px-[3px] leading-none disabled:text-[#b8b0c0] disabled:bg-[#faf4fc]";
  const push = "h-4 w-[42px] border border-[#203c74] bg-linear-to-b from-white to-[#c8cce4] leading-none whitespace-nowrap";
  return (
    <div role="dialog" aria-label="Automatic duct generation" className="absolute top-[327px] left-[58px] z-20 w-[270px] rounded-t-md bg-[#3868c8] px-[3px] pb-[3px]">
      <div className="-mx-[3px] flex h-5 items-center justify-between rounded-t-md bg-linear-to-b from-[#2a50a8] via-[#6ca0ec] via-20% to-[#2c56b4] pt-0.5 pr-[3px] pl-1">
        <h1 className="font-['Open_Sans',sans-serif] text-[9px] leading-none font-semibold text-white">Automatic duct generation</h1>
        <button type="button" aria-label="Close" className="flex size-[13px] items-center justify-center rounded-xs border border-[#f0d0c8] bg-[#d85838]">
          <svg viewBox="0 0 8 8" className="size-2" stroke="#fff" strokeWidth="1.4"><path d="M1 1l6 6M7 1L1 7" /></svg>
        </button>
      </div>
      <div className={"bg-[#ece6f8] px-[3px] pt-1 pb-0.5 text-[#2c2834] " + fieldText}>
        <div className="flex items-end">
          {["Dimensioning", "Assistant"].map((t) => (
            <button
              key={t}
              type="button"
              onClick={() => setTab(t)}
              className={
                t === tab
                  ? "relative top-px h-[15px] rounded-t-xs border border-t-2 border-b-0 border-[#a4a8c0] border-t-[#f0a838] bg-[#fcf6ff] px-[3px]"
                  : "h-3 rounded-t-xs border border-b-0 border-[#a4a8c0] bg-[#f6f0fc] px-0.5"
              }
            >
              {t}
            </button>
          ))}
        </div>
        <div className="flex h-[168px] gap-4 border border-[#a4a8c0] bg-[#fcf6ff] pt-3 pl-3">
          <div className="w-[96px] pt-[3px]">
            <div className="flex h-4 items-center gap-4 pl-[5px]">
              <Radio name="shape" label="Round" />
              <Radio name="shape" label="Angular" checked />
            </div>
            <div className="relative mt-[5px]">
              <select aria-label="Diameter" disabled className="block h-[14px] w-full appearance-none border border-[#c8c0d8] bg-[#ece4f4] px-0.5 leading-3 text-[#b0a4bc]">
                <option>Diameter</option>
              </select>
              <svg viewBox="0 0 8 8" className="pointer-events-none absolute top-[3px] right-[3px] size-2" fill="none" stroke="#b8b4d0" strokeWidth="1.5"><path d={DOWN} /></svg>
            </div>
            <div className="mt-[5px] flex justify-end">
              <input aria-label="Diameter value" disabled defaultValue="0" className={box + " w-[46px]"} />
            </div>
            <div className="mt-[5px] flex items-center justify-between">
              <label htmlFor="width">Width (in)</label>
              <input id="width" defaultValue="0" className={box + " w-[46px]"} />
            </div>
            <div className="mt-[5px] flex items-center justify-between">
              <label htmlFor="height">Height (in)</label>
              <input id="height" defaultValue="18" className={box + " w-[46px]"} />
            </div>
            <div className="mt-[6px] flex items-center justify-between">
              <label className="-ml-[3px] flex items-center gap-[3px]">
                <input type="checkbox" className="size-[9px] appearance-none border border-[#4a5c6c] bg-[#f0ecf8]" />
                W/H
              </label>
              <input aria-label="W/H ratio" defaultValue="0.7" className={box + " w-[46px]"} />
            </div>
          </div>
          <div className="w-[120px] pt-[3px]">
            <div className="flex h-[14px] items-center">
              <Radio name="mode" label="R-Value" className="w-[43px]" />
              <Radio name="mode" label="Velocity" checked />
            </div>
            <div className="mt-1.5 flex items-center">
              <label htmlFor="r" className="w-[59px]">R</label>
              <input id="r" disabled defaultValue="0.25" className={box + " w-[41px]"} />
            </div>
            <div className="mt-0.5 flex items-center">
              <label htmlFor="w" className="w-[59px]">w</label>
              <input id="w" defaultValue="600" className={box + " w-[41px]"} />
            </div>
            <div className="mt-0.5 flex h-3 items-center">
              <Radio name="limit" label="Min" className="w-[43px]" />
              <Radio name="limit" label="Max" checked />
            </div>
            <div className="mt-1 flex items-center">
              <span className="w-[60px]">Adapt from</span>
              <button type="button" className={push}>Segment &lt;</button>
            </div>
            <div className="mt-[9px] flex h-3 items-center whitespace-nowrap">
              <Radio name="align" label="Center" checked className="w-[37px]" />
              <Radio name="align" label="Top" className="w-[39px]" />
              <Radio name="align" label="Bottom" />
            </div>
            <button type="button" className={push + " mt-1.5 ml-[21px] block"}>Assign&lt;&lt;</button>
          </div>
        </div>
      </div>
    </div>
  );
}

function LayersWindow() {
  return (
    <section className="absolute right-[100px] bottom-[9px] z-20 w-[275px] border border-[#6c6878] bg-[#ece6f4]">
      <div className="flex h-3 items-center justify-between bg-[#3458a0] px-1">
        <h2 className="text-[7px] leading-none font-bold text-white">Layers</h2>
        <button type="button" aria-label="Close layers" className="flex size-[9px] items-center justify-center bg-[#f4f0fa]">
          <svg viewBox="0 0 8 8" className="size-[7px]" stroke="#000" strokeWidth="1.4"><path d="M1 1l6 6M7 1L1 7" /></svg>
        </button>
      </div>
      <div className="flex h-5 items-center gap-1 px-[3px]">
        <ToolButton name="layersBlue" />
        <div className="flex h-[15px] flex-1 items-center bg-white pl-0.5">
          {["bulb", "sunYellow", "twoCirc", "unlockYellow", "square"].map((n) => (
            <Icon key={n} name={n} className="size-[11px]" />
          ))}
          <select aria-label="Layer" className="h-[15px] min-w-0 flex-1 appearance-none bg-transparent px-0.5 font-['Liberation_Sans',sans-serif] text-[8px] leading-3">
            <option>D__FUND3</option>
          </select>
          <span className="flex h-[13px] w-[11px] items-center justify-center border border-[#a4a8c8] bg-[#d4daf0]">
            <svg viewBox="0 0 8 8" className="size-[7px]" fill="none" stroke="#28304c" strokeWidth="1.6"><path d={DOWN} /></svg>
          </span>
        </div>
        <ToolButton name="layersGreen" icon="size-[13px]" />
        <ToolButton name="undo" icon="size-[13px]" />
        <ToolButton name="copy" icon="size-[13px]" />
      </div>
    </section>
  );
}

const STATUS: [string, boolean][] = [
  ["SNAP", false], ["GRID", false], ["ORTHO", false], ["POLAR", true], ["OSNAP", true],
  ["OTRACK", false], ["DUCS", false], ["DYN", false], ["LWT", false], ["MODEL", true],
];

export default function App() {
  return (
    <div className="relative flex h-screen min-h-[720px] overflow-hidden bg-[#ece4f2] font-['DejaVu_Sans_Condensed','DejaVu_Sans',sans-serif] text-[#1c1a24]">
      <div className="flex min-w-0 flex-1 flex-col">
        <header className="shrink-0">
          <div className="flex h-[19px] items-center gap-[3px] border-t border-[#0c1c50] bg-linear-to-b from-[#3c68c0] via-[#6ca4ec] via-20% to-[#2850ac] pl-0.5">
            <svg viewBox="0 0 12 12" className="size-[11px]"><path d="M0 0h12v12H0z" fill="#dfeee8" /><path d="M1 11l3-9 3 9M7 3l4 4-3 4M2 7h8" stroke="#2a8060" fill="none" /></svg>
            <h1 className="font-['Open_Sans',sans-serif] text-[9px] leading-none font-semibold text-white">AutoCAD 2008 - [C:\Projects\CATS\Ventilation-1.dwg]</h1>
          </div>
          <nav className="flex h-[14px] items-center gap-[9px] bg-[#ece4f6] pl-0.5 text-[7px] leading-none">
            <svg viewBox="0 0 12 12" className="-mr-1 size-[11px]"><path d="M0 4l5-3 6 8-4 3z" fill="#3a68b0" /><path d="M3 0l6 1v4l-4 1z" fill="#f0c040" /></svg>
            {MENUS.map((m) => (
              <button key={m} type="button">{m}</button>
            ))}
          </nav>
          <div className="flex h-[19px] items-center border-t border-[#d0c8d8] pl-2">
            {ROW_ONE.split(" ").map((n, i) => <ToolButton key={i} name={n} className="h-4 flex-1" />)}
          </div>
          <div className="flex h-5 items-center border-t border-b-2 border-[#d0c8d8] border-b-[#8c8898] pl-2">
            {ROW_TWO.split(" ").map((n, i) => {
              if (n === "|") return <span key={i} className="mx-1 h-4 w-1 shrink-0 border-x border-[#bcb4c8]" />;
              if (n === ".") return <span key={i} className="w-1 shrink-0" />;
              return <ToolButton key={i} name={n} className="h-4 flex-1" />;
            })}
          </div>
        </header>
        <div className="flex min-h-0 flex-1">
          <Palette />
          <Workspace />
        </div>
        <footer className={"flex h-[13px] shrink-0 items-center border-t border-[#c8c0d0] bg-[#f2eefc] pl-[3px] " + fieldText}>
          <span className="w-[100px] border-r border-[#c8c0d0] whitespace-pre">{"59'-9\",   -5'-3\"  , 0'-0\""}</span>
          {STATUS.map(([label, on]) => (
            <button
              key={label}
              type="button"
              className={on ? "ml-px h-3 border border-b-0 border-[#3c3a44] px-px pt-px" : "ml-px h-3 border-r border-[#a8a4b4] px-px pt-px"}
            >
              {label}
            </button>
          ))}
          <div className="ml-auto flex items-center gap-2 pr-0.5">
            <Icon name="unlockYellow" />
            <svg viewBox="0 0 6 4" className="h-[3px] w-[5px]"><path d="M0 0h6L3 4z" fill="#111" /></svg>
            <span className="size-[11px] border border-[#2a5a94] bg-[#9cc0e8]" />
          </div>
        </footer>
      </div>
      <div className="w-[3px] shrink-0 bg-[repeating-linear-gradient(#000_0_5px,#2c6a34_5px_6px,#101010_6px_11px,#6a2c64_11px_12px)]" />

      <Logo />
      <DuctDialog />
      <LayersWindow />
      <svg viewBox="0 0 10 14" className="absolute top-[190px] left-[98px] z-10 h-[14px] w-[10px]" aria-hidden="true">
        <path d="M0 0v11l3-2 2 4 2-1-2-4h4z" fill="#fff" stroke="#222" strokeWidth="0.8" />
      </svg>
    </div>
  );
}
